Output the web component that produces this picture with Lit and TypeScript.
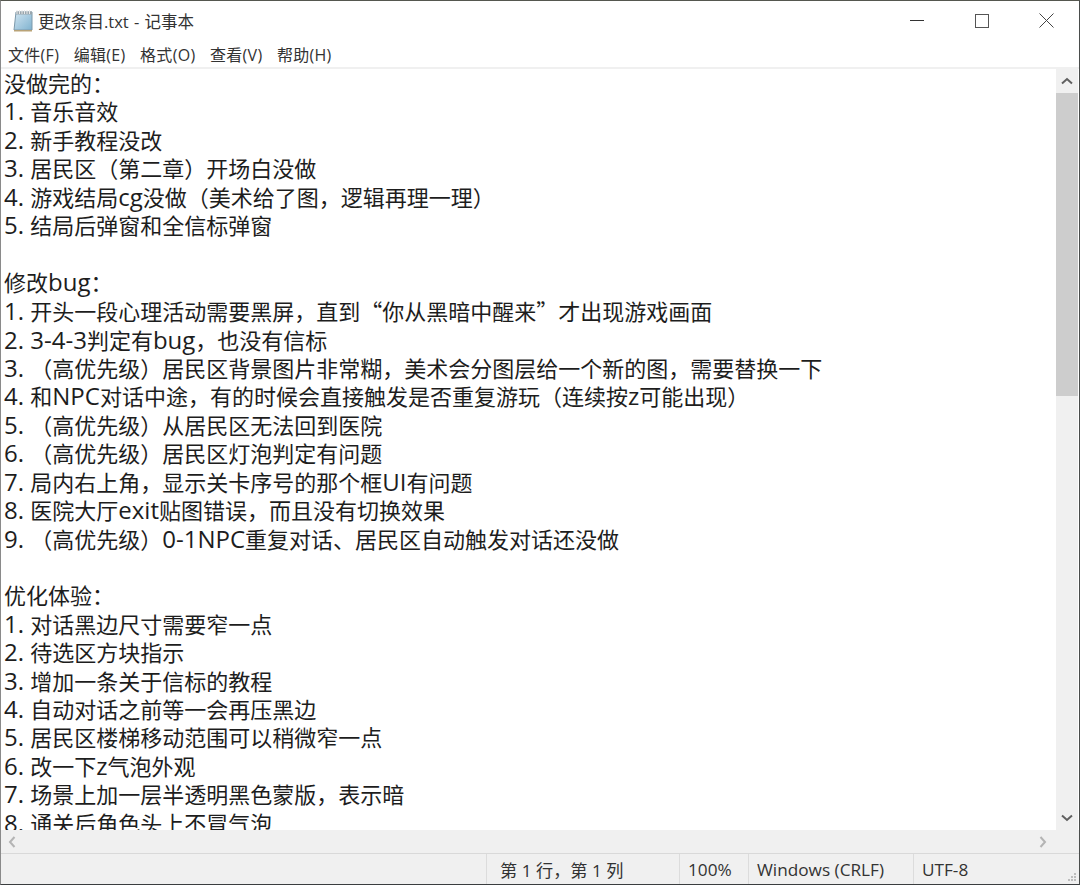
import { LitElement, html, css } from "lit";
import { customElement } from "lit/decorators.js";

const TEXT = `没做完的：
1. 音乐音效
2. 新手教程没改
3. 居民区（第二章）开场白没做
4. 游戏结局cg没做（美术给了图，逻辑再理一理）
5. 结局后弹窗和全信标弹窗

修改bug：
1. 开头一段心理活动需要黑屏，直到“你从黑暗中醒来”才出现游戏画面
2. 3-4-3判定有bug，也没有信标
3. （高优先级）居民区背景图片非常糊，美术会分图层给一个新的图，需要替换一下
4. 和NPC对话中途，有的时候会直接触发是否重复游玩（连续按z可能出现）
5. （高优先级）从居民区无法回到医院
6. （高优先级）居民区灯泡判定有问题
7. 局内右上角，显示关卡序号的那个框UI有问题
8. 医院大厅exit贴图错误，而且没有切换效果
9. （高优先级）0-1NPC重复对话、居民区自动触发对话还没做

优化体验：
1. 对话黑边尺寸需要窄一点
2. 待选区方块指示
3. 增加一条关于信标的教程
4. 自动对话之前等一会再压黑边
5. 居民区楼梯移动范围可以稍微窄一点
6. 改一下z气泡外观
7. 场景上加一层半透明黑色蒙版，表示暗
8. 通关后角色头上不冒气泡`;

const MENU = ["文件(F)", "编辑(E)", "格式(O)", "查看(V)", "帮助(H)"];

@customElement("app-root")
export class AppRoot extends LitElement {
  static styles = css`
    :host {
      display: block;
      width: 1080px;
      height: 885px;
      overflow: hidden;
      font-family: "Open Sans", "Noto Sans CJK SC", sans-serif;
      color: #1c1c1c;
      background: #fff;
    }
    .window {
      box-sizing: border-box;
      height: 885px;
      display: flex;
      flex-direction: column;
      border-top: 1px solid #55574f;
      border-right: 1px solid #4a4d4c;
      border-bottom: 1px solid #3a3d3f;
      border-left: 1px solid #8a8a8a;
    }
    .title {
      height: 39px;
      flex: none;
      display: flex;
      align-items: center;
      padding-left: 11px;
      gap: 4px;
      font-size: 16.5px;
      color: #333;
    }
    .title svg { flex: none; }
    .title-text { flex: 1; white-space: pre; word-spacing: 1px; }
    .controls { display: flex; align-items: center; }
    .ctl { width: 65px; height: 39px; display: flex; align-items: center; justify-content: center; }
    .menu {
      height: 27px;
      flex: none;
      display: flex;
      align-items: center;
      padding-left: 7px;
      font-size: 16px;
      letter-spacing: 0.3px;
      color: #333;
      border-bottom: 2px solid #f0f0f0;
    }
    .menu span { white-space: pre; margin-right: 14.5px; }
    .middle { flex: 1; min-height: 0; display: flex; }
    .editor {
      flex: 1;
      min-width: 0;
      overflow: hidden;
      margin: 0;
      padding: 0 0 0 3px;
      font-family: "Open Sans", "Noto Sans CJK SC", sans-serif;
      font-size: 22px;
      line-height: 28.4px;
      white-space: pre;
      color: #1d1d1d;
    }
    .q { font-family: "Noto Sans CJK SC", sans-serif; }
    .l { font-size: 24px; line-height: 0; }
    .vbar {
      width: 22px;
      flex: none;
      margin-right: 1px;
      background: #f0f0f0;
      display: flex;
      flex-direction: column;
    }
    .arrow { height: 24px; flex: none; display: flex; align-items: center; justify-content: center; }
    .thumb { height: 303px; flex: none; background: #cdcdcd; }
    .track { flex: 1; }
    .hbar {
      height: 23px;
      flex: none;
      background: #f0f0f0;
      display: flex;
      align-items: center;
      justify-content: space-between;
      padding: 0 32px 0 7px;
      border-bottom: 1px solid #d9d9d9;
    }
    .status {
      height: 30px;
      flex: none;
      display: flex;
      background: #f0f0f0;
      font-size: 17.2px;
      color: #333;
      position: relative;
    }
    .cell {
      box-sizing: border-box;
      display: flex;
      align-items: center;
      padding-left: 8px;
      border-left: 1px solid #dcdcdc;
      white-space: pre;
    }
    .spacer { width: 485px; flex: none; }
    .pos { width: 193px; padding-left: 13px; }
    .zoom { width: 69px; }
    .enc { width: 165px; }
    .utf { flex: 1; }
    .grip { position: absolute; right: 2px; bottom: 2px; }
  `;

  private icon() {
    return html`<svg width="22" height="24" viewBox="0 0 22 24">
      <defs>
        <linearGradient id="pg" x1="0" y1="0" x2="1" y2="1">
          <stop offset="0" stop-color="#d3e6f2"></stop>
          <stop offset="1" stop-color="#7fb2cf"></stop>
        </linearGradient>
      </defs>
      <path d="M4 3h16v18H2z" fill="url(#pg)" stroke="#7d99aa" stroke-width="1"></path>
      <path d="M4 2.500h16v3H4z" fill="#9aa6ad"></path>
      <path d="M5 1v4M7.500 1v4M10 1v4M12.500 1v4M15 1v4M17.500 1v4" stroke="#e8e8e8" stroke-width="1"></path>
      <path d="M2 21h18v1.500H2z" fill="#b9a377"></path>
    </svg>`;
  }

  private editorText() {
    return TEXT.split(/([A-Za-z0-9.\- ]+|[“”])/).map((p) => {
      if (p === "“" || p === "”") return html`<span class="q">${p}</span>`;
      if (/^[A-Za-z0-9.\- ]+$/.test(p)) return html`<span class="l">${p}</span>`;
      return p;
    });
  }

  render() {
    return html`<div class="window">
      <div class="title">
        ${this.icon()}
        <div class="title-text">更改条目.txt - 记事本</div>
        <div class="controls">
          <div class="ctl"><svg width="14" height="14" viewBox="0 0 14 14"><path d="M0 6.500h14" stroke="#333" stroke-width="1"></path></svg></div>
          <div class="ctl"><svg width="14" height="14" viewBox="0 0 14 14"><rect x="0.500" y="0.500" width="13" height="13" fill="none" stroke="#555" stroke-width="1"></rect></svg></div>
          <div class="ctl"><svg width="15" height="15" viewBox="0 0 15 15"><path d="M0.500 0.500l14 14M14.500 0.500l-14 14" stroke="#444" stroke-width="1"></path></svg></div>
        </div>
      </div>
      <div class="menu">${MENU.map((m) => html`<span>${m}</span>`)}</div>
      <div class="middle">
        <pre class="editor">${this.editorText()}</pre>
        <div class="vbar">
          <div class="arrow"><svg width="12" height="8" viewBox="0 0 12 8"><path d="M1 6.500l5-4.500 5 4.500" fill="none" stroke="#606060" stroke-width="2"></path></svg></div>
          <div class="thumb"></div>
          <div class="track"></div>
          <div class="arrow"><svg width="12" height="8" viewBox="0 0 12 8"><path d="M1 1.500l5 4.500 5-4.500" fill="none" stroke="#606060" stroke-width="2"></path></svg></div>
        </div>
      </div>
      <div class="hbar">
        <svg width="8" height="12" viewBox="0 0 8 12"><path d="M6.500 1L2 6l4.500 5" fill="none" stroke="#b4b4b4" stroke-width="2"></path></svg>
        <svg width="8" height="12" viewBox="0 0 8 12"><path d="M1.500 1L6 6l-4.500 5" fill="none" stroke="#b4b4b4" stroke-width="2"></path></svg>
      </div>
      <div class="status">
        <div class="spacer"></div>
        <div class="cell pos">第 1 行，第 1 列</div>
        <div class="cell zoom">100%</div>
        <div class="cell enc">Windows (CRLF)</div>
        <div class="cell utf">UTF-8</div>
        <svg class="grip" width="10" height="10" viewBox="0 0 10 10" fill="#bdbdbd">
          <rect x="7" y="1" width="2" height="2"></rect>
          <rect x="4" y="4" width="2" height="2"></rect><rect x="7" y="4" width="2" height="2"></rect>
          <rect x="1" y="7" width="2" height="2"></rect><rect x="4" y="7" width="2" height="2"></rect><rect x="7" y="7" width="2" height="2"></rect>
        </svg>
      </div>
    </div>`;
  }
}
